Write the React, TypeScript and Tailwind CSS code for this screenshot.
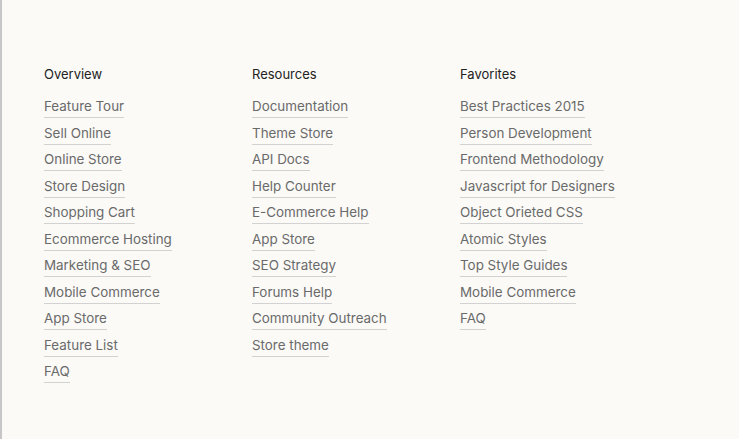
const columns = [
  {
    title: "Overview",
    links: [
      "Feature Tour",
      "Sell Online",
      "Online Store",
      "Store Design",
      "Shopping Cart",
      "Ecommerce Hosting",
      "Marketing & SEO",
      "Mobile Commerce",
      "App Store",
      "Feature List",
      "FAQ",
    ],
  },
  {
    title: "Resources",
    links: [
      "Documentation",
      "Theme Store",
      "API Docs",
      "Help Counter",
      "E-Commerce Help",
      "App Store",
      "SEO Strategy",
      "Forums Help",
      "Community Outreach",
      "Store theme",
    ],
  },
  {
    title: "Favorites",
    links: [
      "Best Practices 2015",
      "Person Development",
      "Frontend Methodology",
      "Javascript for Designers",
      "Object Orieted CSS",
      "Atomic Styles",
      "Top Style Guides",
      "Mobile Commerce",
      "FAQ",
    ],
  },
];

export default function App() {
  return (
    <div className="h-[439px] w-[739px] bg-[#fbfaf7] border-l-2 border-[#c6c6c6] pl-[42px] pt-[65px] font-['Inter',sans-serif]">
      <div className="flex">
        {columns.map((col) => (
          <div key={col.title} className="w-[208px]">
            <h3 className="text-[13px] leading-[18px] text-[#222] mb-[10px]">{col.title}</h3>
            <ul>
              {col.links.map((link) => (
                <li key={link} className="h-[26.5px]">
                  <a
                    href="#"
                    className="inline-block text-[13.4px] leading-[18px] text-[#6a6a6a] border-b border-[#d2d2d2] pb-[2px]"
                  >
                    {link}
                  </a>
                </li>
              ))}
            </ul>
          </div>
        ))}
      </div>
    </div>
  );
}
